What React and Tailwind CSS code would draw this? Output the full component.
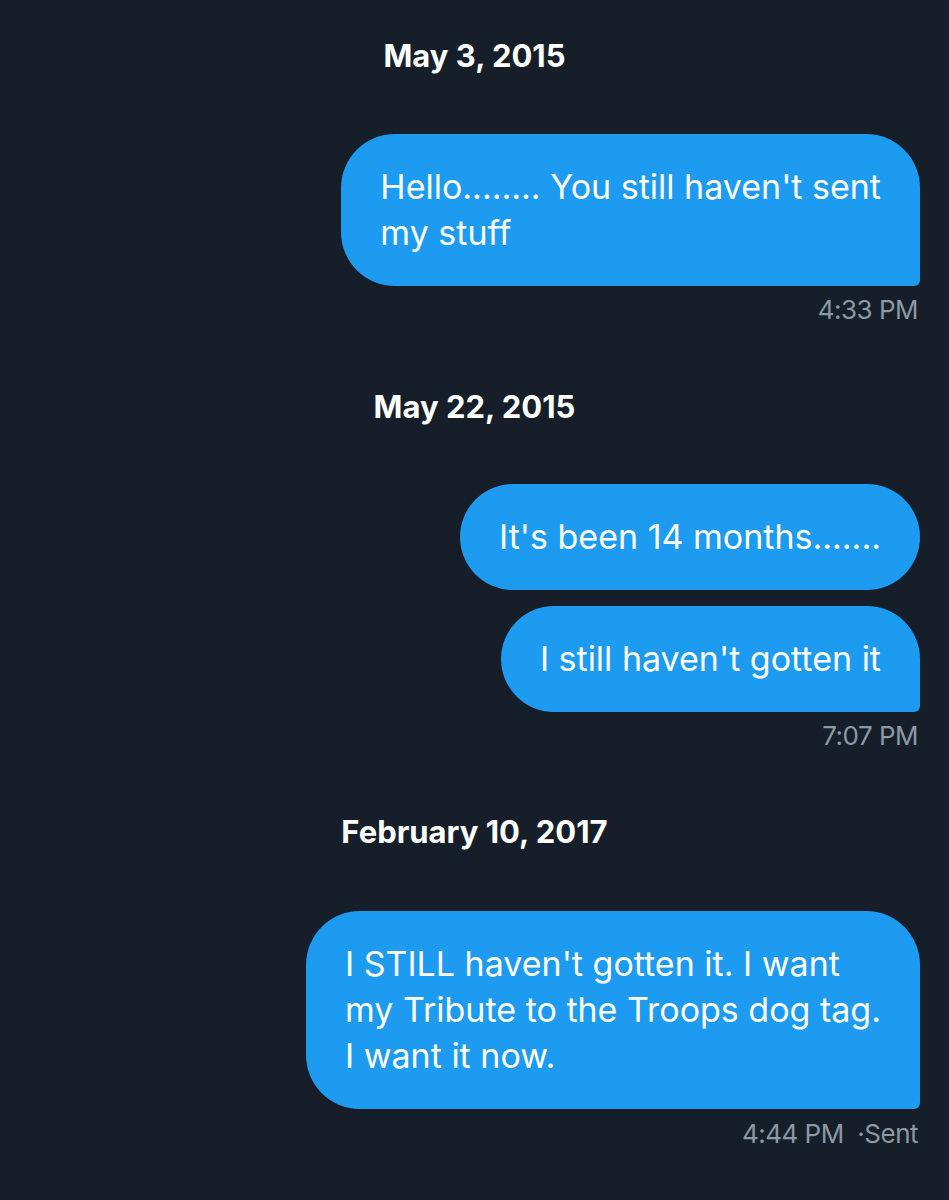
import React from "react";

const font = { fontFamily: "Inter, 'Liberation Sans', sans-serif" };

function DateLabel({ children, className = "" }) {
  return (
    <div className={`text-center text-[31px] leading-[36px] font-bold text-white ${className}`}>
      {children}
    </div>
  );
}

function Bubble({ lines, corner = "rounded-br-[6px]", className = "" }) {
  return (
    <div className={`self-end mr-[29px] bg-[#1d9bf0] text-white text-[34px] leading-[46px] px-[39px] py-[30px] rounded-[54px] ${corner} ${className}`}>
      {lines.map((l, i) => (
        <div key={i} className="whitespace-nowrap">{l}</div>
      ))}
    </div>
  );
}

function Stamp({ children, className = "" }) {
  return (
    <div className={`self-end mr-[31px] text-[26px] leading-[30px] text-[#8b98a5] tracking-[-0.5px] ${className}`}>
      {children}
    </div>
  );
}

export default function App() {
  return (
    <div style={font} className="min-h-screen w-[949px] h-[1200px] overflow-hidden bg-[#161f29]">
      <div className="flex flex-col">
        <DateLabel className="mt-[38px]">May 3, 2015</DateLabel>

        <Bubble className="mt-[60px]" lines={["Hello........ You still haven't sent", "my stuff"]} />
        <Stamp className="mt-[9px]">4:33 PM</Stamp>

        <DateLabel className="mt-[64px]">May 22, 2015</DateLabel>

        <Bubble className="mt-[59px]" corner="" lines={["It's been 14 months......."]} />
        <Bubble className="mt-[16px]" lines={["I still haven't gotten it"]} />
        <Stamp className="mt-[9px]">7:07 PM</Stamp>

        <DateLabel className="mt-[63px]">February 10, 2017</DateLabel>

        <Bubble
          className="mt-[61px]"
          lines={[
            "I STILL haven't gotten it. I want",
            "my Tribute to the Troops dog tag.",
            "I want it now.",
          ]}
        />
        <Stamp className="mt-[10px]">4:44 PM &nbsp;·Sent</Stamp>
      </div>
    </div>
  );
}
